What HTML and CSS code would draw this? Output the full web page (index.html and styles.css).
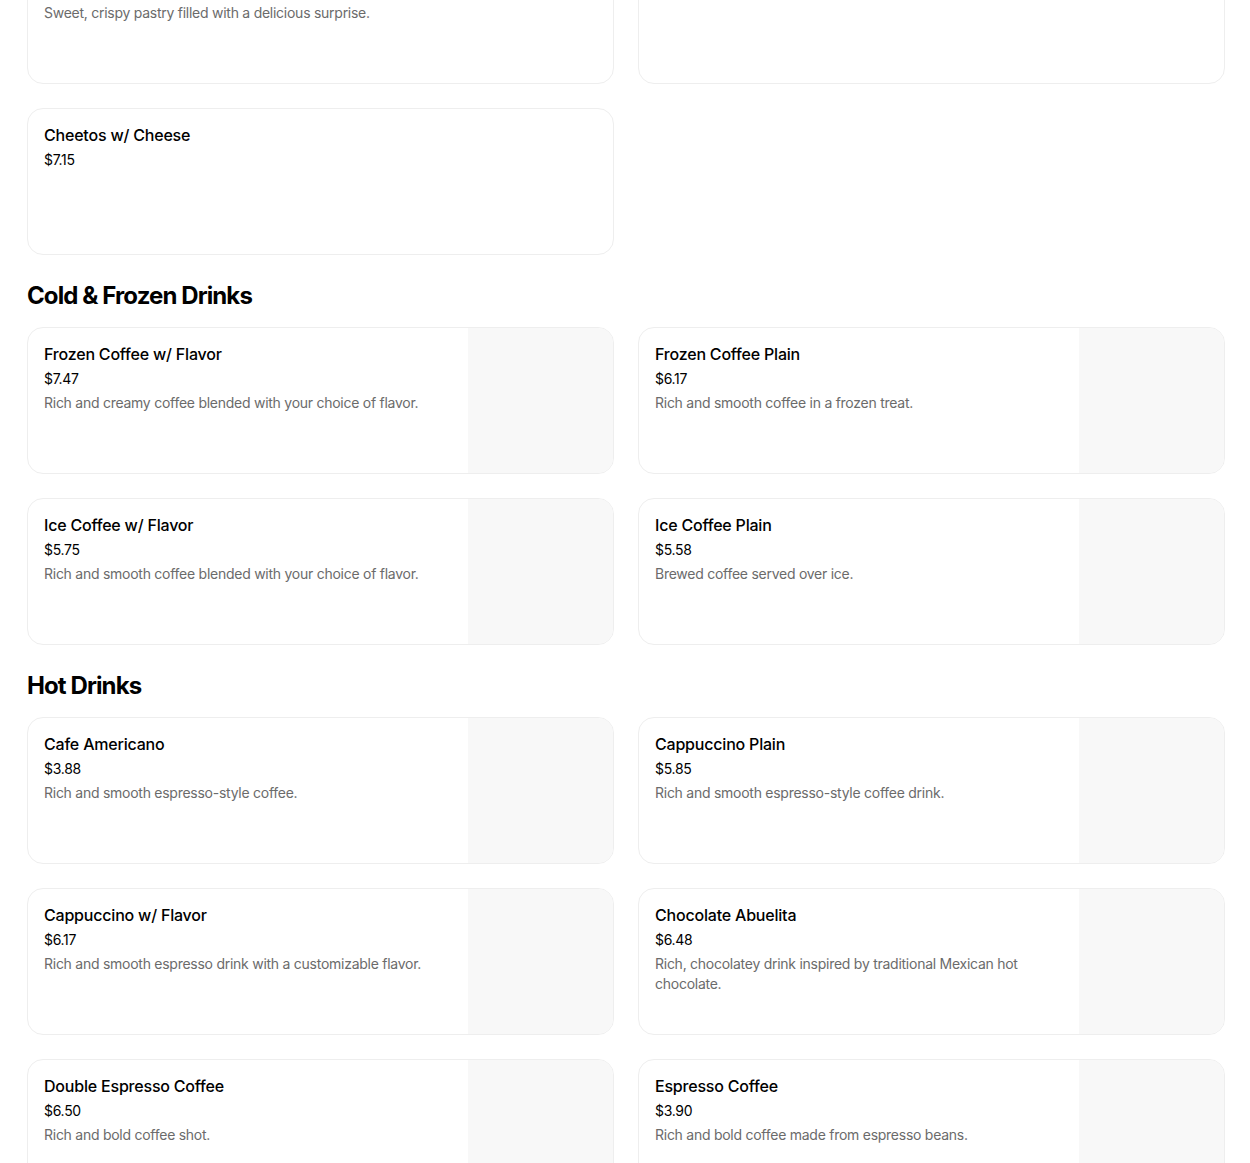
FILE: index.html
```html
<!doctype html>
<html lang="en">
    <head>
        <meta charset="UTF-8" />
        <meta name="viewport" content="width=device-width, initial-scale=1.0" />
        <title>Menu</title>
        <link rel="stylesheet" href="styles.css">
    </head>
    <body>
        <main class="menu">
            <section class="menu-section">
                <div class="item-grid">
                    <article class="item-card">
                        <div class="item-info">
                            <h3 class="item-name">Empanada</h3>
                            <p class="item-price">$3.25</p>
                            <p class="item-desc">Sweet, crispy pastry filled with a delicious surprise.</p>
                        </div>
                    </article>
                    <article class="item-card">
                        <div class="item-info">
                            <h3 class="item-name">Hot Cheetos</h3>
                            <p class="item-price">$5.50</p>
                        </div>
                    </article>
                    <article class="item-card">
                        <div class="item-info">
                            <h3 class="item-name">Cheetos w/ Cheese</h3>
                            <p class="item-price">$7.15</p>
                        </div>
                    </article>
                </div>
            </section>

            <section class="menu-section">
                <h2 class="section-title">Cold &amp; Frozen Drinks</h2>
                <div class="item-grid">
                    <article class="item-card">
                        <div class="item-info">
                            <h3 class="item-name">Frozen Coffee w/ Flavor</h3>
                            <p class="item-price">$7.47</p>
                            <p class="item-desc">Rich and creamy coffee blended with your choice of flavor.</p>
                        </div>
                        <div class="item-thumb"></div>
                    </article>
                    <article class="item-card">
                        <div class="item-info">
                            <h3 class="item-name">Frozen Coffee Plain</h3>
                            <p class="item-price">$6.17</p>
                            <p class="item-desc">Rich and smooth coffee in a frozen treat.</p>
                        </div>
                        <div class="item-thumb"></div>
                    </article>
                    <article class="item-card">
                        <div class="item-info">
                            <h3 class="item-name">Ice Coffee w/ Flavor</h3>
                            <p class="item-price">$5.75</p>
                            <p class="item-desc">Rich and smooth coffee blended with your choice of flavor.</p>
                        </div>
                        <div class="item-thumb"></div>
                    </article>
                    <article class="item-card">
                        <div class="item-info">
                            <h3 class="item-name">Ice Coffee Plain</h3>
                            <p class="item-price">$5.58</p>
                            <p class="item-desc">Brewed coffee served over ice.</p>
                        </div>
                        <div class="item-thumb"></div>
                    </article>
                </div>
            </section>

            <section class="menu-section">
                <h2 class="section-title">Hot Drinks</h2>
                <div class="item-grid">
                    <article class="item-card">
                        <div class="item-info">
                            <h3 class="item-name">Cafe Americano</h3>
                            <p class="item-price">$3.88</p>
                            <p class="item-desc">Rich and smooth espresso-style coffee.</p>
                        </div>
                        <div class="item-thumb"></div>
                    </article>
                    <article class="item-card">
                        <div class="item-info">
                            <h3 class="item-name">Cappuccino Plain</h3>
                            <p class="item-price">$5.85</p>
                            <p class="item-desc">Rich and smooth espresso-style coffee drink.</p>
                        </div>
                        <div class="item-thumb"></div>
                    </article>
                    <article class="item-card">
                        <div class="item-info">
                            <h3 class="item-name">Cappuccino w/ Flavor</h3>
                            <p class="item-price">$6.17</p>
                            <p class="item-desc">Rich and smooth espresso drink with a customizable flavor.</p>
                        </div>
                        <div class="item-thumb"></div>
                    </article>
                    <article class="item-card">
                        <div class="item-info">
                            <h3 class="item-name">Chocolate Abuelita</h3>
                            <p class="item-price">$6.48</p>
                            <p class="item-desc">Rich, chocolatey drink inspired by traditional Mexican hot chocolate.</p>
                        </div>
                        <div class="item-thumb"></div>
                    </article>
                    <article class="item-card">
                        <div class="item-info">
                            <h3 class="item-name">Double Espresso Coffee</h3>
                            <p class="item-price">$6.50</p>
                            <p class="item-desc">Rich and bold coffee shot.</p>
                        </div>
                        <div class="item-thumb"></div>
                    </article>
                    <article class="item-card">
                        <div class="item-info">
                            <h3 class="item-name">Espresso Coffee</h3>
                            <p class="item-price">$3.90</p>
                            <p class="item-desc">Rich and bold coffee made from espresso beans.</p>
                        </div>
                        <div class="item-thumb"></div>
                    </article>
                </div>
            </section>
        </main>
    </body>
</html>
```

FILE: styles.css
```css
* {
    margin: 0;
    padding: 0;
    box-sizing: border-box;
}

body {
    font-family: "Inter", "Noto Sans", sans-serif;
    background: #ffffff;
    color: #000000;
    overflow: hidden;
}

/* page is shown scrolled part way down the menu */
.menu {
    margin-top: -63px;
    padding: 0 25px 0 27px;
}

.menu-section + .menu-section {
    margin-top: 25px;
}

.section-title {
    font-size: 24px;
    line-height: 32px;
    font-weight: 700;
    letter-spacing: -0.9px;
    margin-bottom: 15px;
}

.item-grid {
    display: grid;
    grid-template-columns: 1fr 1fr;
    gap: 24px;
}

.item-card {
    display: flex;
    height: 147px;
    border: 1px solid #eeeeee;
    border-radius: 16px;
    overflow: hidden;
    background: #ffffff;
}

.item-info {
    flex: 1;
    min-width: 0;
    padding: 14px 16px;
}

.item-name {
    font-size: 16px;
    line-height: 24px;
    font-weight: 500;
    letter-spacing: -0.2px;
}

.item-price {
    font-size: 14px;
    line-height: 20px;
    margin-top: 3px;
    letter-spacing: -0.3px;
}

.item-desc {
    font-size: 14px;
    line-height: 20px;
    margin-top: 4px;
    color: #6b6b6b;
    letter-spacing: -0.26px;
}

.item-thumb {
    flex: 0 0 145px;
    background: #f8f8f8;
}
```
